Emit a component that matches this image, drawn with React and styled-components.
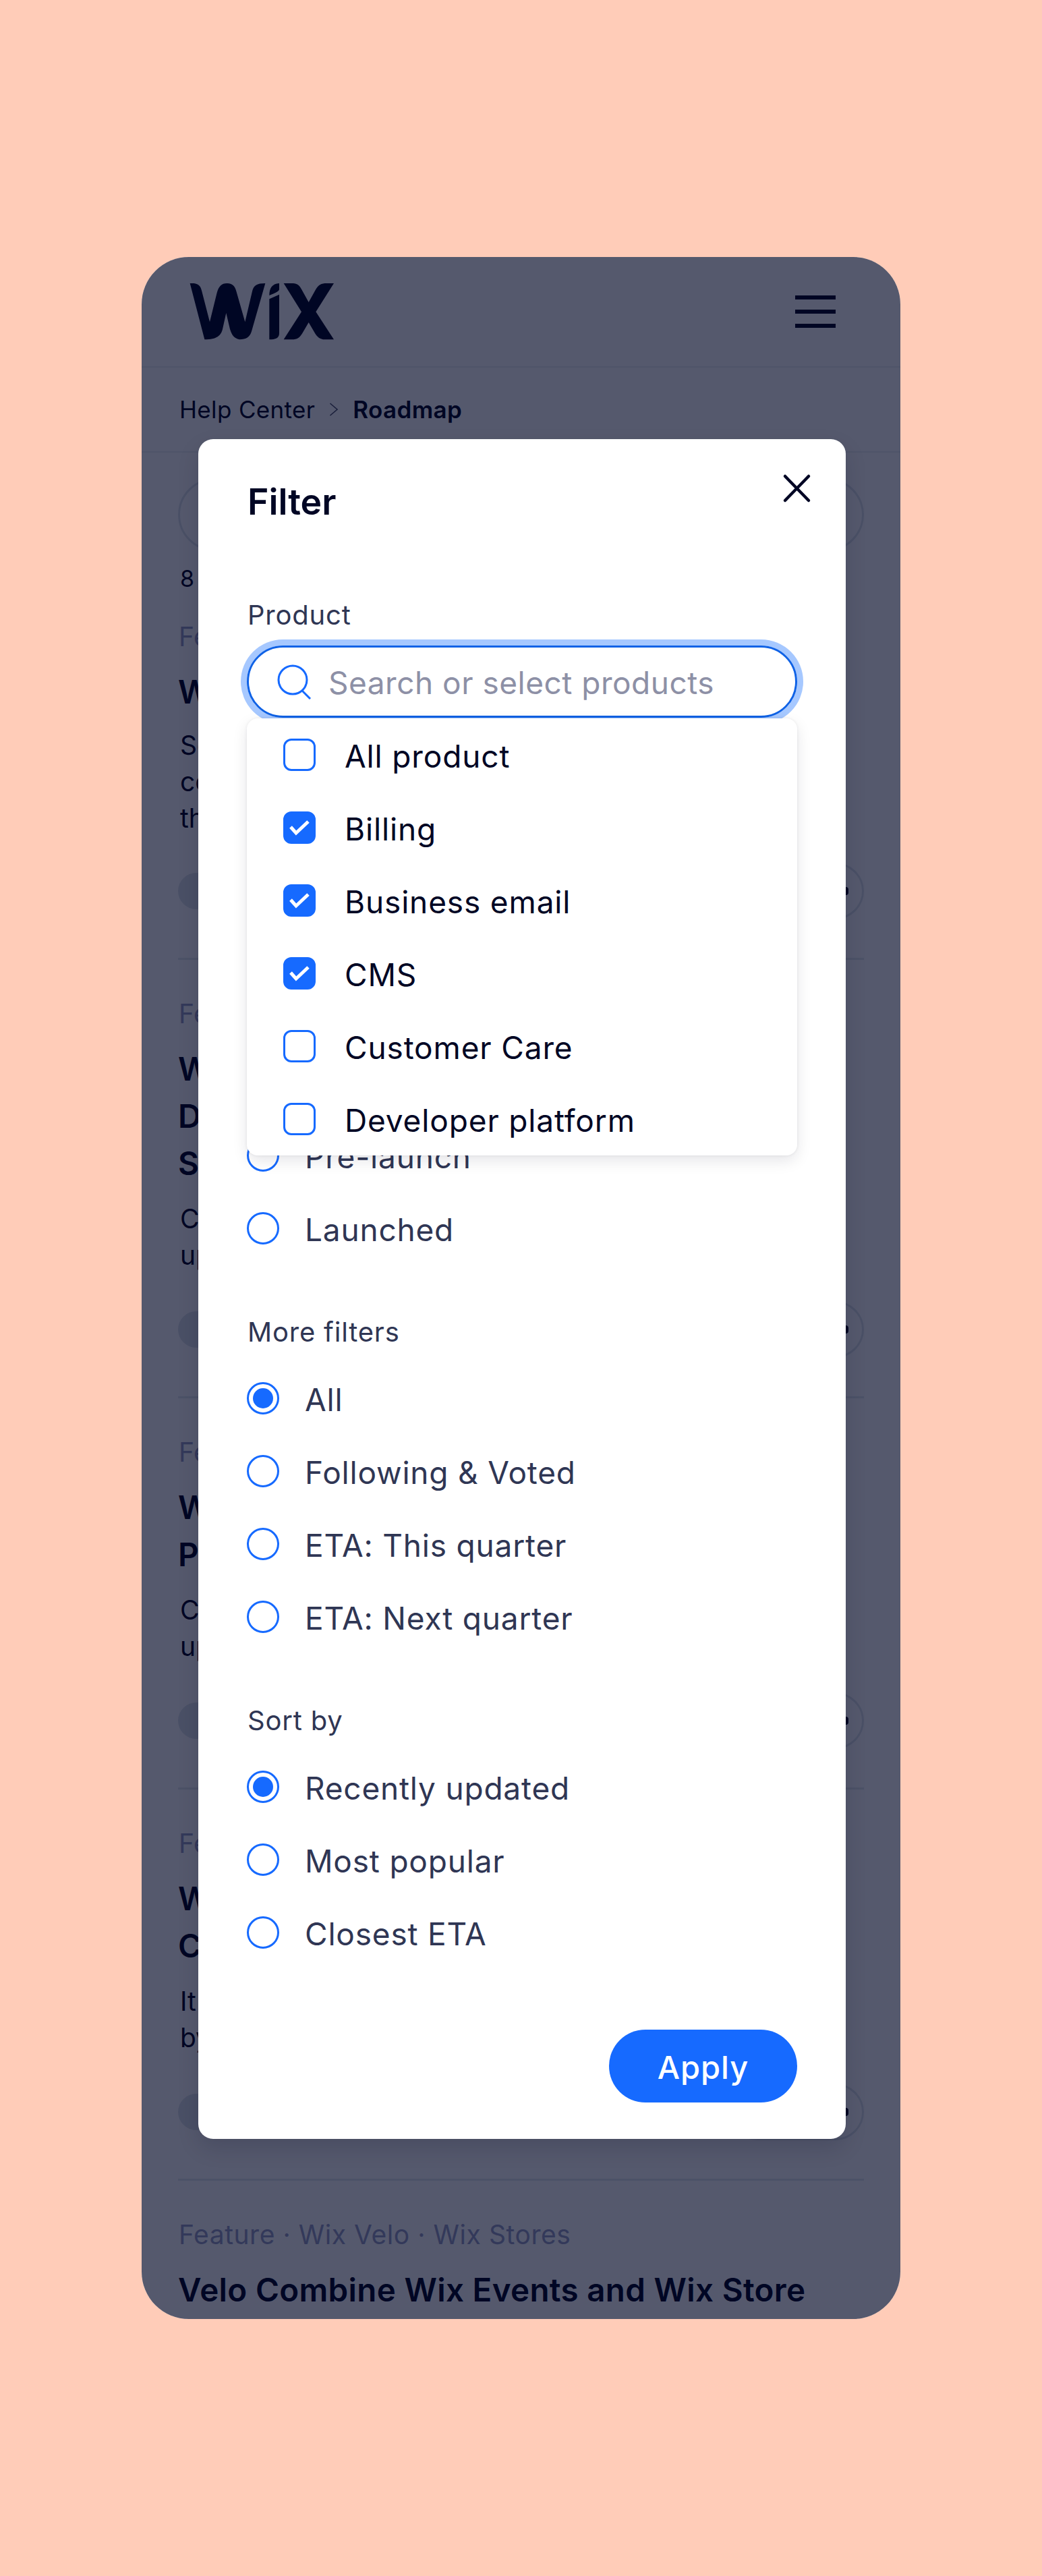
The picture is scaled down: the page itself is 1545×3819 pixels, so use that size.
import React from "react";
import styled, { createGlobalStyle } from "styled-components";

const Global = createGlobalStyle`
  html, body { margin: 0; padding: 0; background: #ffccb8; }
  * { box-sizing: border-box; }
  body { font-family: Inter, "Liberation Sans", sans-serif; color: #000624; }
`;

const Page = styled.div`
  width: 1545px;
  height: 3819px;
  padding: 381px 210px;
  background: #ffccb8;
`;

const Phone = styled.div`
  position: relative;
  width: 1125px;
  height: 3057px;
  background: #fff;
  border-radius: 70px;
  overflow: hidden;
`;

const Scrim = styled.div`
  position: absolute;
  inset: 0;
  background: rgba(0, 6, 36, 0.667);
`;

const Header = styled.header`
  height: 164px;
  display: flex;
  align-items: flex-start;
  justify-content: space-between;
  padding: 33px 96px 0 65px;
  border-bottom: 2px solid #eceff2;
`;

const Burger = styled.div`
  display: flex;
  flex-direction: column;
  gap: 15px;
  width: 60px;
  margin-top: 24px;
  span { display: block; height: 6px; background: #000624; }
`;

const Crumbs = styled.nav`
  height: 126px;
  display: flex;
  align-items: center;
  gap: 21px;
  padding-left: 56px;
  font-size: 35px;
  letter-spacing: 0.35px;
  font-weight: 375;
  border-bottom: 2px solid #eceff2;
  strong { font-weight: 600; }
`;

const Content = styled.main`
  padding: 38px 54px 0;
`;

const SearchPill = styled.div`
  height: 108px;
  border: 3px solid #dfe5eb;
  border-radius: 54px;
`;

const Results = styled.div`
  margin-top: 14px;
  padding-left: 3px;
  font-size: 34px;
  line-height: 54px;
`;

const Meta = styled.div`
  padding-left: 1px;
  font-size: 39px;
  line-height: 54px;
  font-weight: 375;
  letter-spacing: 0.55px;
  color: #999fc6;
`;

const Title = styled.h2`
  margin: 20px 0 0;
  font-size: 47.5px;
  line-height: 70px;
  letter-spacing: 0.33px;
  font-weight: 600;
`;

const Line = styled.div`
  white-space: nowrap;
`;

const Desc = styled.p`
  margin: 20px 0 0;
  padding-left: 3px;
  font-size: 39px;
  line-height: 54px;
  font-weight: 375;
`;

const Actions = styled.div`
  margin-top: 41px;
  height: 84px;
  display: flex;
  align-items: center;
  justify-content: space-between;
`;

const Item = styled.article`
  padding: 53px 0 57px;
  border-bottom: 3px solid #e4eaed;
  &:first-of-type {
    padding-top: 32px;
    ${Desc} { margin-top: 17px; }
    ${Actions} { margin-top: 39px; }
  }
`;

const Votes = styled.div`
  width: 160px;
  height: 54px;
  border-radius: 27px;
  background: #dde3e9;
`;

const Follow = styled.div`
  width: 200px;
  height: 84px;
  border: 3px solid #dfe5eb;
  border-radius: 42px;
  display: flex;
  align-items: center;
  justify-content: flex-end;
  padding-right: 20px;
  &::after {
    content: "";
    width: 8px;
    height: 12px;
    border-radius: 4px;
    background: #000624;
  }
`;

const Modal = styled.section`
  position: absolute;
  top: 270px;
  left: 84px;
  width: 960px;
  padding: 59px 72px 54px;
  background: #fff;
  border-radius: 22px;
  box-shadow: 0 14px 32px rgba(0, 6, 36, 0.14);
`;

const ModalHead = styled.div`
  position: relative;
  height: 64px;
  margin-bottom: 111px;
`;

const ModalTitle = styled.h1`
  margin: 0;
  padding: 2px 0 0 1px;
  font-size: 53.5px;
  line-height: 64px;
  font-weight: 600;
`;

const Close = styled.div`
  position: absolute;
  top: -8px;
  right: -21px;
  width: 44px;
  height: 44px;
  svg { display: block; }
`;

const FieldLabel = styled.div`
  padding-left: 1px;
  font-size: 40px;
  line-height: 54px;
  font-weight: 375;
  letter-spacing: 0.8px;
  color: #2f3654;
`;

const Field = styled.div`
  position: relative;
  margin-top: 18px;
  height: 107px;
`;

const InputBox = styled.div`
  height: 107px;
  display: flex;
  align-items: center;
  gap: 24px;
  padding-left: 42px;
  border: 3px solid #0f62e6;
  border-radius: 54px;
  box-shadow: 0 0 0 9px #a6c8ff;
  svg { display: block; flex: none; }
`;

const Placeholder = styled.span`
  margin-top: 3px;
  font-size: 46px;
  font-weight: 375;
  letter-spacing: 0.5px;
  color: #8d90a6;
`;

const Dropdown = styled.div`
  position: absolute;
  top: 108px;
  left: 0;
  right: 0;
  background: #fff;
  border-radius: 16px;
  box-shadow: 0 8px 22px rgba(0, 6, 36, 0.1), 0 0 4px rgba(0, 6, 36, 0.08);
  z-index: 2;
`;

const Option = styled.div`
  height: 108px;
  display: flex;
  align-items: center;
  gap: 43px;
  padding-left: 54px;
`;

const Check = styled.span`
  width: 48px;
  height: 48px;
  flex: none;
  border-radius: 12px;
  border: 3px solid #166aff;
  background: ${(p) => (p.$on ? "#166aff" : "#fff")};
  display: flex;
  align-items: center;
  justify-content: center;
`;

const OptionText = styled.span`
  margin-top: 3px;
  font-size: 46px;
  font-weight: 375;
  letter-spacing: 0.85px;
  color: #000624;
`;

const Group = styled.div`
  margin-top: ${(p) => p.$top}px;
`;

const Rows = styled.div`
  margin-top: 17px;
`;

const Row = styled.div`
  height: 108px;
  display: flex;
  align-items: center;
  gap: 38px;
`;

const RowText = styled.span`
  margin-top: 3px;
  font-size: 46px;
  font-weight: 375;
  letter-spacing: 0.8px;
  color: #2f3654;
`;

const Radio = styled.span`
  width: 48px;
  height: 48px;
  flex: none;
  border-radius: 50%;
  border: 3px solid #166aff;
  display: flex;
  align-items: center;
  justify-content: center;
  &::after {
    content: "";
    width: 30px;
    height: 30px;
    border-radius: 50%;
    background: ${(p) => (p.$on ? "#166aff" : "transparent")};
  }
`;

const Footer = styled.div`
  margin-top: 90px;
  display: flex;
  justify-content: flex-end;
`;

const Apply = styled.button`
  width: 279px;
  height: 108px;
  padding: 3px 0 0;
  border: 0;
  border-radius: 54px;
  background: #166aff;
  color: #fff;
  font: 500 47px Inter, "Liberation Sans", sans-serif;
  letter-spacing: 1px;
`;

const Logo = () => (
  <svg width="226" height="96" viewBox="0 0 678 288" fill="#000624">
    <path d="M20 18 C48 16 66 22 72 50 L108 190 L140 60 C148 32 160 18 185 18 C212 18 222 34 228 60 L265 190 L296 58 C302 26 318 18 355 18 L294 232 C286 258 270 268 240 268 C216 262 206 248 198 222 L181 150 L165 222 C158 250 140 268 85 268 Z" />
    <path d="M373 72 C373 40 385 20 417 18 L417 46 C412 58 396 62 373 72 Z" />
    <path d="M373 88 L417 68 L417 240 C417 262 400 268 373 268 Z" />
    <path d="M437 18 L478 18 C498 18 508 30 516 44 L548 102 L578 48 C592 24 604 18 628 18 L660 18 L580 145 L660 268 L620 268 C598 268 586 256 576 240 L548 192 L520 240 C508 260 496 268 474 268 L437 268 L516 145 Z" />
  </svg>
);

const Chevron = () => (
  <svg width="14" height="20" viewBox="0 0 14 20" fill="none" stroke="#4b5068" strokeWidth="1.6">
    <path d="M1.5 1 L12 10 L1.5 19" />
  </svg>
);

const items = [
  { meta: "Feature · Wix Bookings", title: ["Wix Bookings"], desc: ["Schedule your services", "connected to your team calendars", "through your site"] },
  { meta: "Feature · Wix Stores", title: ["Wix Stores", "Digital Products", "Subscriptions"], desc: ["Create new offers", "upcoming plans"] },
  { meta: "Feature · Wix Blog", title: ["Wix Blog", "Post Scheduling"], desc: ["Create new posts", "upcoming drafts"] },
  { meta: "Feature · Wix Events", title: ["Wix Events", "Calendar View"], desc: ["It will be possible", "by next quarter"] },
];

const products = [
  ["All product", false],
  ["Billing", true],
  ["Business email", true],
  ["CMS", true],
  ["Customer Care", false],
  ["Developer platform", false],
];

const groups = [
  { label: "Status", top: 92, rows: ["All", "Considering", "Planned", "In development", "Pre-launch", "Launched"], on: -1 },
  { label: "More filters", top: 73, rows: ["All", "Following & Voted", "ETA: This quarter", "ETA: Next quarter"], on: 0 },
  { label: "Sort by", top: 73, rows: ["Recently updated", "Most popular", "Closest ETA"], on: 0 },
];

export default function App() {
  return (
    <Page>
      <Global />
      <Phone>
        <Header>
          <Logo />
          <Burger>
            <span />
            <span />
            <span />
          </Burger>
        </Header>
        <Crumbs>
          Help Center
          <Chevron />
          <strong>Roadmap</strong>
        </Crumbs>
        <Content>
          <SearchPill />
          <Results>8 results</Results>
          {items.map((it) => (
            <Item key={it.meta}>
              <Meta>{it.meta}</Meta>
              <Title>
                {it.title.map((l) => (
                  <Line key={l}>{l}</Line>
                ))}
              </Title>
              <Desc>
                {it.desc.map((l) => (
                  <Line key={l}>{l}</Line>
                ))}
              </Desc>
              <Actions>
                <Votes />
                <Follow />
              </Actions>
            </Item>
          ))}
          <Item>
            <Meta>Feature · Wix Velo · Wix Stores</Meta>
            <Title>
              <Line>Velo Combine Wix Events and Wix Store</Line>
            </Title>
          </Item>
        </Content>
        <Scrim />
        <Modal>
          <ModalHead>
            <ModalTitle>Filter</ModalTitle>
            <Close>
              <svg width="44" height="44" viewBox="0 0 44 44" fill="none" stroke="#000624" strokeWidth="4.5" strokeLinecap="round">
                <path d="M5 4 L40 40 M40 4 L5 40" />
              </svg>
            </Close>
          </ModalHead>
          <FieldLabel>Product</FieldLabel>
          <Field>
            <InputBox>
              <svg width="52" height="52" viewBox="0 0 52 52" fill="none" stroke="#166aff" strokeWidth="3">
                <circle cx="23" cy="23" r="21" />
                <path d="M37 39 L49 51" />
              </svg>
              <Placeholder>Search or select products</Placeholder>
            </InputBox>
            <Dropdown>
              {products.map(([name, on]) => (
                <Option key={name}>
                  <Check $on={on}>
                    {on && (
                      <svg width="30" height="24" viewBox="0 0 30 24" fill="none" stroke="#fff" strokeWidth="5">
                        <path d="M2 11 L10 20 L28 3" />
                      </svg>
                    )}
                  </Check>
                  <OptionText>{name}</OptionText>
                </Option>
              ))}
            </Dropdown>
          </Field>
          {groups.map((g) => (
            <Group key={g.label} $top={g.top}>
              <FieldLabel>{g.label}</FieldLabel>
              <Rows>
                {g.rows.map((r, i) => (
                  <Row key={r}>
                    <Radio $on={i === g.on} />
                    <RowText>{r}</RowText>
                  </Row>
                ))}
              </Rows>
            </Group>
          ))}
          <Footer>
            <Apply>Apply</Apply>
          </Footer>
        </Modal>
      </Phone>
    </Page>
  );
}
